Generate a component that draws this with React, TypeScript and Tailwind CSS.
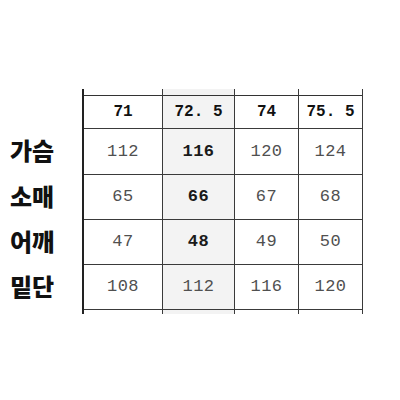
import React from "react";

const cols = [
  { w: "w-[79px]", bg: "bg-white", head: "71", vals: [["112", false], ["65", false], ["47", false], ["108", false]] },
  { w: "w-[72px]", bg: "bg-[#f3f3f3]", head: "72. 5", vals: [["116", true], ["66", true], ["48", true], ["112", false]] },
  { w: "w-[64px]", bg: "bg-white", head: "74", vals: [["120", false], ["67", false], ["49", false], ["116", false]] },
  { w: "w-[64px]", bg: "bg-white", head: "75. 5", vals: [["124", false], ["68", false], ["50", false], ["120", false]] },
] as const;

const rowH = ["h-[46px]", "h-[45px]", "h-[45px]", "h-[46px]"];
const labels = ["가슴", "소매", "어깨", "밑단"];

export default function App() {
  return (
    <div className="w-[400px] h-[400px] bg-white flex pt-[89px] pl-[10px]">
      <div className="w-[72px] flex flex-col">
        <div className="h-[39px]" />
        {labels.map((l, i) => (
          <div key={l} className={`${rowH[i]} flex items-center text-[24px] font-black text-[#111] leading-none pb-[2px]`} style={{ fontFamily: '"Noto Sans CJK KR", sans-serif' }}>
            {l}
          </div>
        ))}
      </div>
      <div className="flex border-l-2 border-[#222] self-start" style={{ fontFamily: '"Liberation Mono", monospace' }}>
        {cols.map((c, ci) => (
          <div key={ci} className={`${c.w} ${c.bg} flex flex-col border-r border-[#3a3a3a]`}>
            <div className="h-[6px]" />
            <div className="h-[33px] border-t border-[#333] flex items-center justify-center text-[16px] font-bold text-[#111]">
              {c.head}
            </div>
            {c.vals.map(([v, b], ri) => (
              <div
                key={ri}
                className={`${rowH[ri]} border-t border-[#3a3a3a] ${ri === 3 ? "border-b" : ""} flex items-center justify-center text-[17px] tracking-[0.5px] ${b ? "font-bold text-[#1a1a1a]" : "text-[#505050]"}`}
              >
                {v}
              </div>
            ))}
            <div className="h-[4px]" />
          </div>
        ))}
      </div>
    </div>
  );
}
